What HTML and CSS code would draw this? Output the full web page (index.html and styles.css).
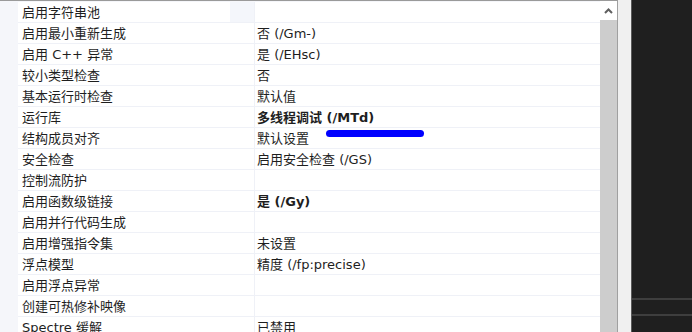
FILE: index.html
```html
<!DOCTYPE html>
<html lang="zh-CN">
<head>
    <meta charset="UTF-8">
    <title>C/C++ 代码生成</title>
    <link rel="stylesheet" href="styles.css">
</head>
<body>
    <div class="grid-panel">
        <div class="prop-list">
            <div class="prop-row first"><span class="prop-name">启用字符串池</span><span class="prop-value"></span></div>
            <div class="prop-row"><span class="prop-name">启用最小重新生成</span><span class="prop-value">否 (/Gm-)</span></div>
            <div class="prop-row"><span class="prop-name">启用 C++ 异常</span><span class="prop-value">是 (/EHsc)</span></div>
            <div class="prop-row"><span class="prop-name">较小类型检查</span><span class="prop-value">否</span></div>
            <div class="prop-row"><span class="prop-name">基本运行时检查</span><span class="prop-value">默认值</span></div>
            <div class="prop-row"><span class="prop-name">运行库</span><span class="prop-value bold">多线程调试 (/MTd)</span></div>
            <div class="prop-row"><span class="prop-name">结构成员对齐</span><span class="prop-value">默认设置</span></div>
            <div class="prop-row"><span class="prop-name">安全检查</span><span class="prop-value">启用安全检查 (/GS)</span></div>
            <div class="prop-row"><span class="prop-name">控制流防护</span><span class="prop-value"></span></div>
            <div class="prop-row"><span class="prop-name">启用函数级链接</span><span class="prop-value bold">是 (/Gy)</span></div>
            <div class="prop-row"><span class="prop-name">启用并行代码生成</span><span class="prop-value"></span></div>
            <div class="prop-row"><span class="prop-name">启用增强指令集</span><span class="prop-value">未设置</span></div>
            <div class="prop-row"><span class="prop-name">浮点模型</span><span class="prop-value">精度 (/fp:precise)</span></div>
            <div class="prop-row"><span class="prop-name">启用浮点异常</span><span class="prop-value"></span></div>
            <div class="prop-row"><span class="prop-name">创建可热修补映像</span><span class="prop-value"></span></div>
            <div class="prop-row"><span class="prop-name">Spectre 缓解</span><span class="prop-value">已禁用</span></div>

            <!-- 手画的蓝色标记 -->
            <div class="pen-mark"></div>
        </div>

        <div class="scrollbar">
            <div class="scroll-up">
                <svg width="9" height="6" viewBox="0 0 9 6">
                    <path d="M1 5 L4.5 1.5 L8 5" fill="none" stroke="#5f5f5f" stroke-width="2"/>
                </svg>
            </div>
            <div class="scroll-thumb"></div>
        </div>
    </div>

    <div class="splitter"></div>

    <div class="dark-pane">
        <div class="dark-line first-line"></div>
        <div class="dark-line"></div>
    </div>
</body>
</html>
```

FILE: styles.css
```css
body {
    margin: 0;
    display: flex;
    height: 332px;
    overflow: hidden;
    background: #f0f0f0;
    font-family: "DejaVu Sans", "Noto Sans CJK SC", sans-serif;
    font-size: 13px;
    color: #1e1e1e;
}

/* 属性表 */
.grid-panel {
    width: 617px;
    display: flex;
    border-top: 1px solid #9a9a9a;
    border-right: 1px solid #a0a0a0;
    background: #ffffff;
}

.prop-list {
    flex: 1;
    position: relative;
    padding-top: 1px;
    padding-left: 18px;
    background: #f5f6fa;
}

.prop-row {
    display: grid;
    grid-template-columns: 237px 1fr;
    height: 20px;
    line-height: 21px;
    border-bottom: 1px solid #eff1f7;
    background: #ffffff;
    overflow: hidden;
}

.prop-name {
    padding-left: 4px;
    white-space: nowrap;
    border-right: 1px solid #eff1f7;
}

.prop-value {
    padding-left: 2px;
    white-space: nowrap;
}

.first .prop-name {
    background: linear-gradient(to right, #ffffff 212px, #f4f6fb 212px);
}

.bold {
    font-weight: bold;
}

.pen-mark {
    position: absolute;
    left: 326px;
    top: 129px;
    width: 98px;
    height: 7px;
    border-radius: 4px;
    background: #0000ff;
}

/* 滚动条 */
.scrollbar {
    width: 17px;
    display: flex;
    flex-direction: column;
    background: #e8e8e8;
}

.scroll-up {
    height: 19px;
    display: flex;
    align-items: center;
    justify-content: center;
    background: #ffffff;
}

.scroll-thumb {
    flex: 1;
    background: #cdcdcd;
}

/* 中间分隔条 */
.splitter {
    width: 13px;
    background: #f0f0f0;
    border-right: 1px solid #5a5a5a;
}

/* 右侧深色区域 */
.dark-pane {
    flex: 1;
    background: #1f1f1f;
    padding-top: 298px;
}

.dark-line {
    height: 2px;
    background: #3e3e3e;
}

.first-line {
    margin-bottom: 14px;
}
```
